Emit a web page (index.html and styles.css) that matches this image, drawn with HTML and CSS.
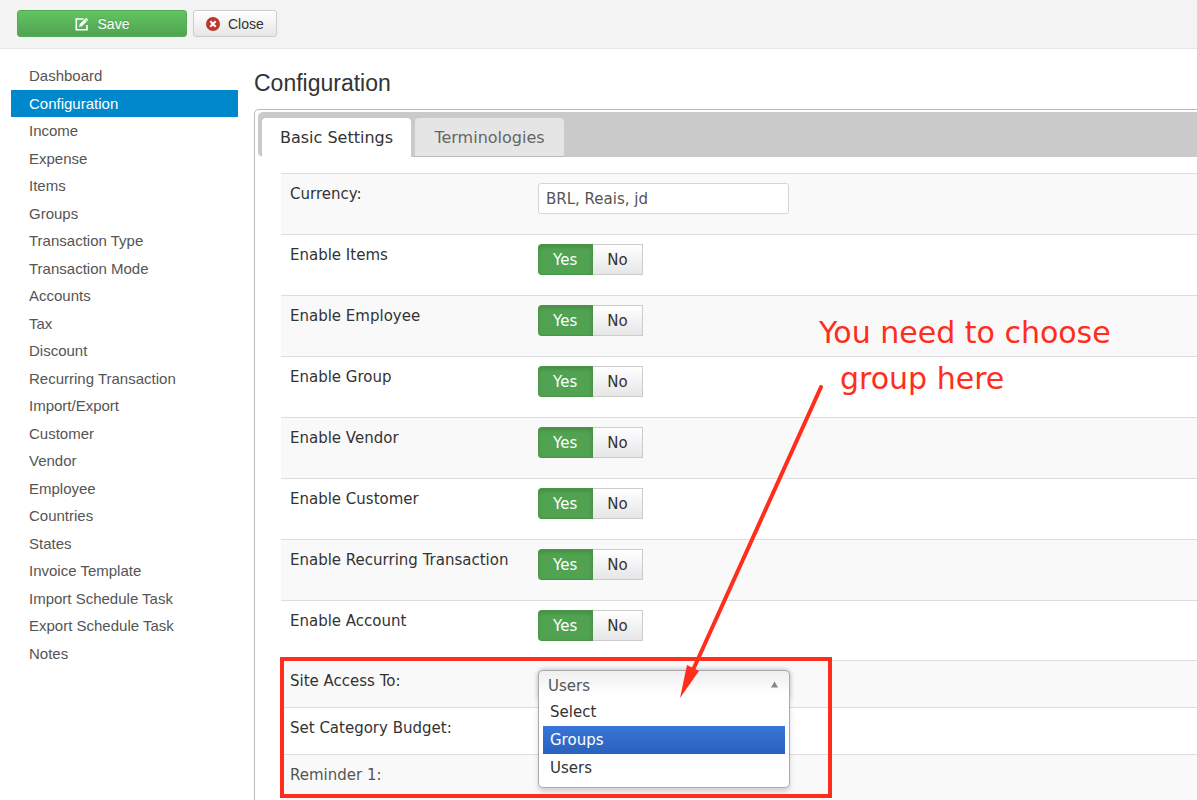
FILE: index.html
```html
<!DOCTYPE html>
<html lang="en">
<head>
<meta charset="utf-8">
<title>Configuration</title>
<link rel="stylesheet" href="styles.css">
</head>
<body>
<div class="page">
  <header class="toolbar">
    <button class="btn btn-save" type="button">
      <svg class="icon-save" viewBox="0 0 14 14" aria-hidden="true"><path d="M8.500 2H1.300v10.700h10.700V8" fill="none" stroke="#fff" stroke-width="1.600"/><path d="M4 10l.8-3L11 .800l2.200 2.200L7 9.200z" fill="#fff"/><path d="M9.800 2l2.200 2.200" stroke="#5bb75b" stroke-width=".6"/></svg>
      Save
    </button>
    <button class="btn btn-close" type="button">
      <svg class="icon-close" viewBox="0 0 14 14" aria-hidden="true"><circle cx="7" cy="7" r="7" fill="#bd362f"/><path d="M4.300 4.300l5.400 5.400M9.700 4.300l-5.400 5.400" stroke="#fff" stroke-width="2"/></svg>
      Close
    </button>
  </header>

  <div class="body">
    <nav class="sidebar" aria-label="Sections">
      <ul class="menu">
        <li><a href="#">Dashboard</a></li>
        <li><a class="current" href="#">Configuration</a></li>
        <li><a href="#">Income</a></li>
        <li><a href="#">Expense</a></li>
        <li><a href="#">Items</a></li>
        <li><a href="#">Groups</a></li>
        <li><a href="#">Transaction Type</a></li>
        <li><a href="#">Transaction Mode</a></li>
        <li><a href="#">Accounts</a></li>
        <li><a href="#">Tax</a></li>
        <li><a href="#">Discount</a></li>
        <li><a href="#">Recurring Transaction</a></li>
        <li><a href="#">Import/Export</a></li>
        <li><a href="#">Customer</a></li>
        <li><a href="#">Vendor</a></li>
        <li><a href="#">Employee</a></li>
        <li><a href="#">Countries</a></li>
        <li><a href="#">States</a></li>
        <li><a href="#">Invoice Template</a></li>
        <li><a href="#">Import Schedule Task</a></li>
        <li><a href="#">Export Schedule Task</a></li>
        <li><a href="#">Notes</a></li>
      </ul>
    </nav>

    <main class="content">
      <h1 class="title">Configuration</h1>
      <section class="panel">
        <div class="tabs" role="tablist">
          <button class="tab active" type="button" role="tab" aria-selected="true">Basic Settings</button>
          <button class="tab" type="button" role="tab" aria-selected="false">Terminologies</button>
        </div>
        <table class="settings">
          <tr><th><label for="currency">Currency:</label></th><td><input class="text" id="currency" type="text" value="BRL, Reais, jd"></td></tr>
          <tr><th>Enable Items</th><td><div class="toggle"><label><input type="radio" name="items" checked>Yes</label><label><input type="radio" name="items">No</label></div></td></tr>
          <tr><th>Enable Employee</th><td><div class="toggle"><label><input type="radio" name="employee" checked>Yes</label><label><input type="radio" name="employee">No</label></div></td></tr>
          <tr><th>Enable Group</th><td><div class="toggle"><label><input type="radio" name="group" checked>Yes</label><label><input type="radio" name="group">No</label></div></td></tr>
          <tr><th>Enable Vendor</th><td><div class="toggle"><label><input type="radio" name="vendor" checked>Yes</label><label><input type="radio" name="vendor">No</label></div></td></tr>
          <tr><th>Enable Customer</th><td><div class="toggle"><label><input type="radio" name="customer" checked>Yes</label><label><input type="radio" name="customer">No</label></div></td></tr>
          <tr><th>Enable Recurring Transaction</th><td><div class="toggle"><label><input type="radio" name="recurring" checked>Yes</label><label><input type="radio" name="recurring">No</label></div></td></tr>
          <tr class="group-end"><th>Enable Account</th><td><div class="toggle"><label><input type="radio" name="account" checked>Yes</label><label><input type="radio" name="account">No</label></div></td></tr>
          <tr class="short"><th><label for="access">Site Access To:</label></th><td>
            <div class="dropdown">
              <select class="dropdown-value" id="access"><option>Select</option><option>Groups</option><option selected>Users</option></select>
              <svg class="caret" viewBox="0 0 8 7" aria-hidden="true"><path d="M4 0l4 7H0z" fill="#888"/></svg>
              <ul class="options" role="listbox" aria-label="Site Access To">
                <li role="option">Select</li>
                <li class="highlight" role="option">Groups</li>
                <li role="option">Users</li>
              </ul>
            </div>
          </td></tr>
          <tr class="short"><th>Set Category Budget:</th><td></td></tr>
          <tr class="short last"><th>Reminder 1:</th><td></td></tr>
        </table>
      </section>
    </main>
  </div>

  <div class="frame"></div>
  <svg class="arrow" viewBox="0 0 150 320" aria-hidden="true"><path d="M146 9L18 292" stroke="#ff2d1c" stroke-width="4" stroke-linecap="round"/><path d="M12 287l12 6L5 320z" fill="#ff2d1c"/></svg>
  <p class="note">You need to choose<br><span class="note-second">group here</span></p>
</div>
</body>
</html>
```
FILE: styles.css
```css
* { box-sizing: border-box; }

body {
  margin: 0;
  background: #fff;
  color: #333;
  font-family: "Liberation Sans", Arial, sans-serif;
  font-size: 15px;
}

ul { list-style: none; margin: 0; padding: 0; }

.page {
  position: relative;
  min-height: 100vh;
  display: flex;
  flex-direction: column;
  overflow: hidden;
}

.toolbar {
  display: flex;
  gap: 6px;
  padding: 10px 17px 11px;
  background: #f3f3f3;
  border-bottom: 1px solid #e8e8e8;
}

.btn {
  display: flex;
  align-items: center;
  justify-content: center;
  height: 27px;
  padding: 0 12px;
  border: 1px solid #ccc;
  border-radius: 3px;
  font: 14px "Liberation Sans", Arial, sans-serif;
}

.btn-save {
  width: 170px;
  gap: 9px;
  color: #fff;
  background: linear-gradient(#62c462, #51a351);
  border-color: #56ab56;
  text-shadow: 0 -1px 0 rgba(0, 0, 0, .15);
}

.btn-close {
  gap: 8px;
  color: #333;
  background: linear-gradient(#fff, #e6e6e6);
}

.icon-save, .icon-close { width: 14px; height: 14px; }

.body { display: flex; flex: 1; }

.sidebar { flex: 0 0 238px; padding: 13px 0 0 11px; }

.menu li:nth-child(odd) { margin-bottom: 1px; }

.menu a {
  display: block;
  padding-left: 18px;
  line-height: 27px;
  color: #555;
  text-decoration: none;
}

.menu .current { color: #fff; background: #0088cc; }

.content {
  flex: 1;
  min-width: 0;
  display: flex;
  flex-direction: column;
  padding: 20px 0 0 16px;
}

.title {
  margin: 0 0 12px;
  font-size: 23px;
  line-height: 28px;
  font-weight: normal;
}

.panel {
  flex: 1;
  padding: 2px 0 0 3px;
  border: 1px solid #bbb;
  border-width: 1px 0 0 1px;
  border-radius: 5px 0 0 0;
  font-family: "DejaVu Sans", Verdana, sans-serif;
}

.tabs {
  display: flex;
  gap: 4px;
  padding: 6px 0 0 4px;
  background: #cacaca;
  border-radius: 5px 0 0 5px;
}

.tab {
  min-width: 149px;
  height: 39px;
  padding: 0 17px;
  border: 0;
  border-bottom: 1px solid #bbb;
  border-radius: 4px 4px 0 0;
  background: #e5e5e5;
  color: #666;
  font: 16px "DejaVu Sans", Verdana, sans-serif;
}

.tab.active { background: #fff; color: #333; border-color: #fff; }

.settings {
  width: calc(100% - 23px);
  margin: 16px 0 0 23px;
  border-collapse: collapse;
  table-layout: fixed;
}

.settings tr { height: 61px; border-top: 1px solid #ddd; }
.settings tr:nth-child(odd) { background: #f9f9f9; }
.settings .group-end { height: 60px; }
.settings .short { height: 47px; }
.settings .last { height: 45px; background: linear-gradient(#f7f7f7, #fff); color: #555; }

.settings th, .settings td {
  padding: 9px;
  line-height: 22px;
  font-weight: normal;
  text-align: left;
  vertical-align: top;
}

.settings th { width: 248px; }
.settings td { padding-bottom: 0; }

.text {
  display: block;
  width: 251px;
  height: 31px;
  padding: 0 7px;
  border: 1px solid #d5d5d5;
  border-radius: 3px;
  background: #fff;
  color: #555;
  font: 15px "DejaVu Sans", Verdana, sans-serif;
}

.toggle { display: flex; }

.toggle label {
  position: relative;
  height: 31px;
  padding: 0 14px;
  border: 1px solid #ccc;
  border-left: 0;
  line-height: 30px;
  background: linear-gradient(#fff, #e6e6e6);
}

.toggle label:first-child { padding: 0 15px; border-radius: 4px 0 0 4px; }

.toggle label:has(:checked) {
  background: #51a351;
  border-color: #489548;
  color: #fff;
  box-shadow: inset 0 2px 4px rgba(0, 0, 0, .15);
}

.toggle input { position: absolute; opacity: 0; margin: 0; }

.dropdown {
  position: relative;
  width: 252px;
  height: 30px;
}

.dropdown-value {
  appearance: none;
  display: block;
  width: 100%;
  height: 30px;
  padding: 0 9px;
  border: 1px solid #aaa;
  border-bottom: 0;
  border-radius: 5px 5px 0 0;
  background: linear-gradient(#eee, #fff 80%);
  box-shadow: 0 0 5px rgba(0, 0, 0, .3);
  color: #555;
  font: 15px "DejaVu Sans", Verdana, sans-serif;
}

.caret { position: absolute; top: 11px; right: 12px; width: 7px; height: 7px; }

.options {
  position: absolute;
  top: 28px;
  left: 0;
  right: 0;
  padding: 0 4px 5px;
  border: 1px solid #aaa;
  border-top: 0;
  border-radius: 0 0 5px 5px;
  background: #fff;
  box-shadow: 0 4px 5px rgba(0, 0, 0, .15);
  color: #333;
}

.options li { padding-left: 7px; line-height: 28px; }
.options .highlight { color: #fff; background: linear-gradient(#3875d7, #2a62bc); }

.frame {
  position: absolute;
  top: 657px;
  left: 280px;
  width: 552px;
  height: 141px;
  border: 4px solid #ff2d1c;
}

.arrow {
  position: absolute;
  top: 378px;
  left: 675px;
  width: 150px;
  height: 320px;
}

.note {
  position: absolute;
  top: 310px;
  left: 819px;
  margin: 0;
  color: #ff2d1c;
  font: 30px/46px "DejaVu Sans", Verdana, sans-serif;
  white-space: nowrap;
}

.note-second { padding-left: 21px; }
```
